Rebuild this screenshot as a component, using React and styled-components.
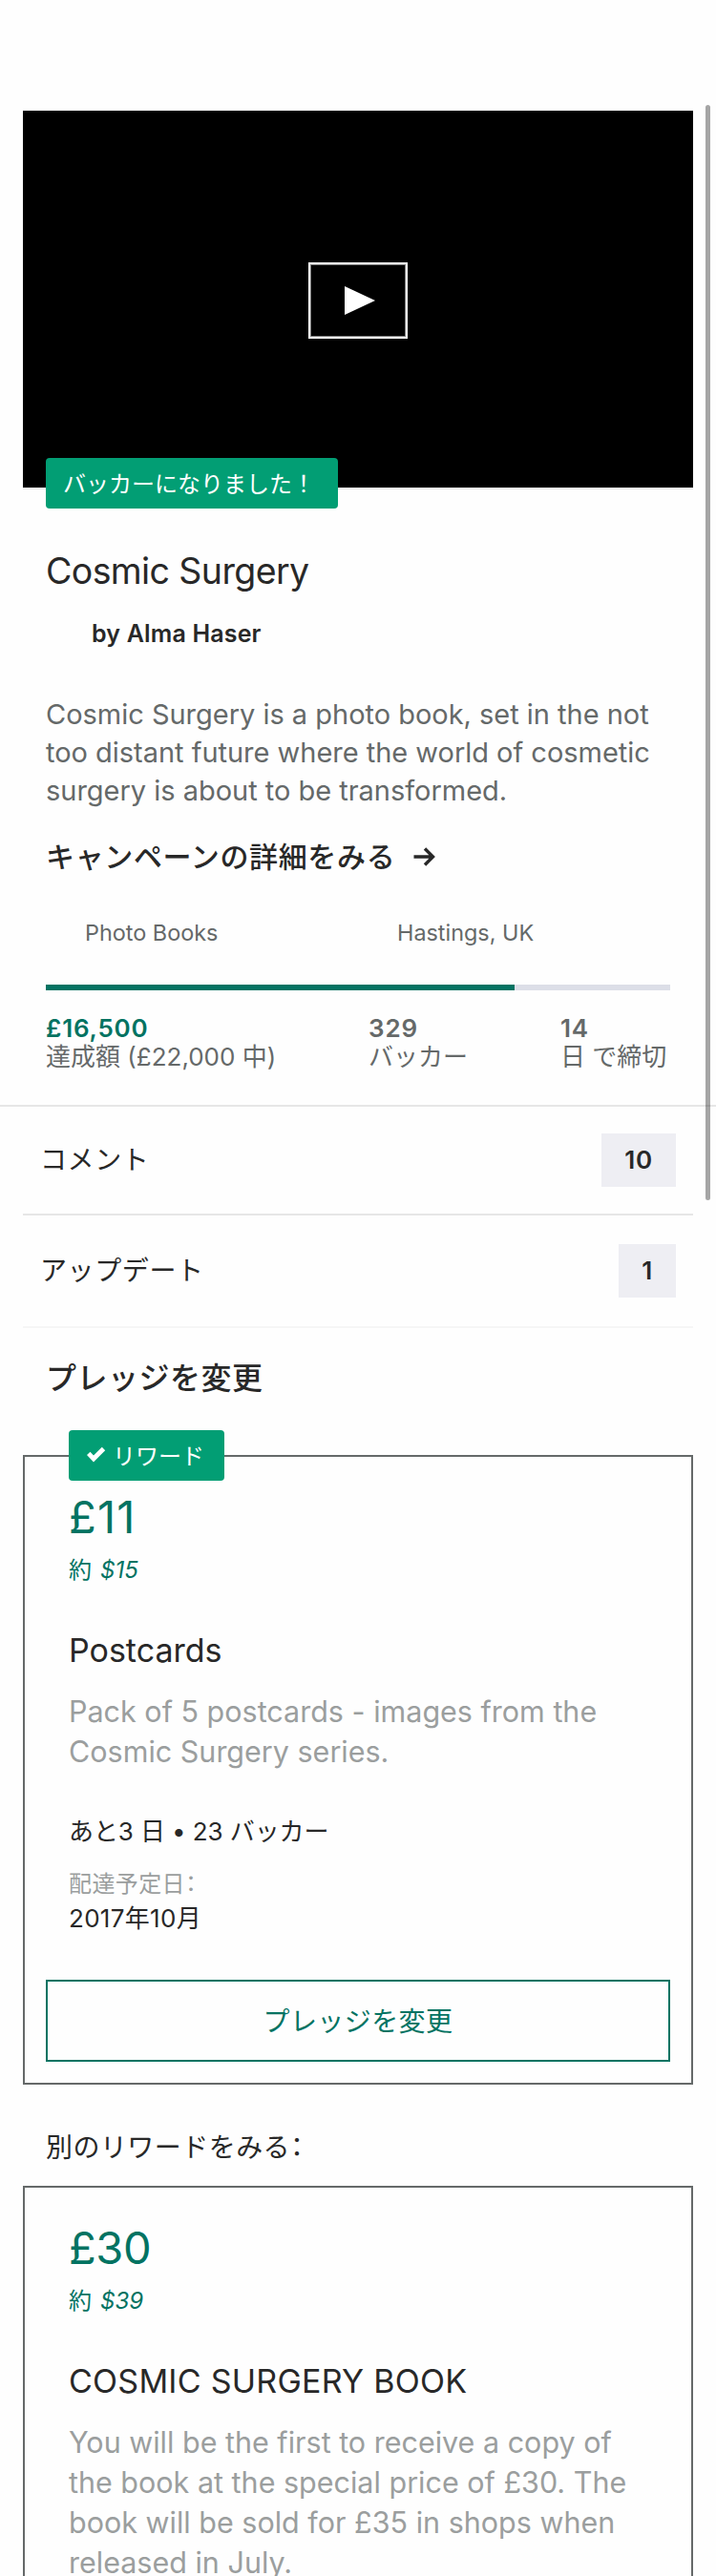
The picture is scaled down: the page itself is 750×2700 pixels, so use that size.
import React from 'react';
import styled, { createGlobalStyle, ThemeProvider } from 'styled-components';

const theme = {
  ink: '#282828',
  body: '#656969',
  muted: '#9b9e9e',
  green: '#037362',
  chip: '#029e74',
  line: '#e6e6e6',
  pale: '#eeeef3',
};

const GlobalStyle = createGlobalStyle`
  *, *::before, *::after { box-sizing: border-box; }
  body {
    margin: 0;
    background: #fefefe;
    font-family: Inter, "Noto Sans CJK JP", sans-serif;
  }
  h1, h2, h3, p { margin: 0; font-weight: 400; }
`;

const Screen = styled.main`
  position: relative;
  width: 750px;
  height: 2700px;
  overflow: hidden;
  padding-top: 116px;
  color: ${(p) => p.theme.ink};
  white-space: nowrap;
`;

const ScrollThumb = styled.div`
  position: absolute;
  top: 110px;
  right: 6px;
  width: 5px;
  height: 1148px;
  border-radius: 3px;
  background: rgba(0, 0, 0, 0.35);
`;

const Video = styled.section`
  position: relative;
  display: flex;
  align-items: center;
  justify-content: center;
  height: 397px;
  margin: 0 24px;
  background: #000;
  border-bottom: 2px solid ${(p) => p.theme.line};
`;

const PlayButton = styled.button`
  display: flex;
  align-items: center;
  justify-content: center;
  width: 104px;
  height: 80px;
  margin: 3px 0 0;
  padding: 0 0 0 4px;
  border: 2px solid #fff;
  outline: 1px solid rgba(255, 255, 255, 0.5);
  outline-offset: -3px;
  background: none;
`;

const Chip = styled.div`
  position: absolute;
  top: ${(p) => p.$top}px;
  left: ${(p) => p.$left}px;
  display: flex;
  align-items: center;
  gap: 7px;
  height: 53px;
  padding: 0 ${(p) => p.$padRight}px 2px 18px;
  border-radius: 4px;
  background: ${(p) => p.theme.chip};
  color: #fff;
  font-size: 24px;
`;

const Summary = styled.section`
  padding: 62px 48px 35px;
`;

const Title = styled.h1`
  font-size: 37.5px;
  line-height: 48px;
  letter-spacing: -0.6px;
`;

const Creator = styled.p`
  margin-top: 25px;
  padding-left: 48px;
  font-size: 25px;
  font-weight: 600;
  line-height: 32px;
  letter-spacing: 0.17px;
`;

const Blurb = styled.p`
  margin-top: 49px;
  color: ${(p) => p.theme.body};
  font-size: 29px;
  line-height: 40px;
  letter-spacing: -0.02px;
`;

const CampaignLink = styled.a`
  display: flex;
  align-items: center;
  gap: 19px;
  margin-top: 29px;
  font-size: 30px;
  font-weight: 500;
  line-height: 40px;
  letter-spacing: 0.65px;
`;

const Categories = styled.div`
  display: grid;
  grid-template-columns: 1fr 1fr;
  margin-top: 45px;
  color: ${(p) => p.theme.body};
  font-size: 23.4px;
  line-height: 30px;
`;

const Category = styled.span`
  padding-left: 41px;
`;

const Track = styled.div`
  height: 6px;
  margin: 39px 0 25px;
  background: #dcdee7;
`;

const Fill = styled.div`
  width: 75%;
  height: 100%;
  background: ${(p) => p.theme.green};
`;

const Stats = styled.div`
  display: flex;
  justify-content: space-between;
  color: ${(p) => p.theme.body};
  font-size: 26px;
  line-height: 30px;
`;

const Stat = styled.div`
  min-width: ${(p) => p.$min || 0}px;
`;

const StatValue = styled.div`
  color: ${(p) => (p.$accent ? p.theme.green : 'inherit')};
  font-weight: 600;
  letter-spacing: 0.8px;
`;

const Row = styled.div`
  display: flex;
  align-items: center;
  justify-content: space-between;
  height: ${(p) => p.$height}px;
  margin: 0 24px;
  padding: 0 18px;
  border-bottom: 2px solid ${(p) => p.$rule};
  font-size: 28px;
  line-height: 40px;
  letter-spacing: 0.6px;
`;

const Rule = styled.div`
  height: 2px;
  background: ${(p) => p.theme.line};
`;

const Count = styled.span`
  padding: 0 24px;
  background: ${(p) => p.theme.pale};
  font-size: 26px;
  font-weight: 600;
  line-height: 56px;
  letter-spacing: 0.8px;
`;

const SectionTitle = styled.h2`
  margin: 29px 48px 56px;
  font-size: 32px;
  font-weight: 500;
  line-height: 48px;
  letter-spacing: 0.5px;
`;

const SectionNote = styled.p`
  margin: 46px 48px 20px;
  font-size: 28px;
  line-height: 40px;
  letter-spacing: 0.45px;
`;

const Card = styled.article`
  position: relative;
  height: ${(p) => p.$height}px;
  margin: 0 24px;
  padding: 35px 22px 0;
  border: 2px solid ${(p) => p.theme.body};
`;

const CardBody = styled.div`
  padding: 0 24px;
`;

const Price = styled.div`
  color: ${(p) => p.theme.green};
  font-size: 47px;
  line-height: 56px;
  letter-spacing: ${(p) => p.$track}px;
`;

const Converted = styled.div`
  display: flex;
  gap: 9px;
  margin-top: 12px;
  color: ${(p) => p.theme.green};
  font-size: 24px;
  line-height: 32px;
`;

const RewardTitle = styled.h3`
  margin-top: 46px;
  font-size: 34px;
  line-height: 44px;
  letter-spacing: ${(p) => p.$track || 0}px;
`;

const RewardText = styled.p`
  margin-top: 21px;
  color: ${(p) => p.theme.muted};
  font-size: 30.5px;
  line-height: 42px;
`;

const Meta = styled.p`
  margin-top: ${(p) => p.$gap || 0}px;
  color: ${(p) => (p.$muted ? p.theme.muted : p.theme.ink)};
  font-size: ${(p) => (p.$muted ? 24 : 26)}px;
  line-height: 36px;
  letter-spacing: ${(p) => p.$track}px;
`;

const Colon = styled.span`
  font-feature-settings: "halt";
`;

const PledgeButton = styled.button`
  display: block;
  width: 100%;
  height: 86px;
  margin-top: 46px;
  padding: 0 0 2px;
  border: 2px solid ${(p) => p.theme.green};
  background: none;
  color: ${(p) => p.theme.green};
  font: inherit;
  font-size: 28px;
  letter-spacing: 0.42px;
`;

const Lines = ({ of }) => of.map((line) => <div key={line}>{line}</div>);

const PlayIcon = () => (
  <svg width="32" height="30" viewBox="0 0 32 30">
    <path d="M0 0L32 15L0 30Z" fill="#fff" />
  </svg>
);

const ArrowIcon = () => (
  <svg width="24" height="22" viewBox="0 0 24 22" fill="none" stroke="#282828" strokeWidth="3.4">
    <path d="M0.5 11H21M12 2.5L20.5 11L12 19.5" />
  </svg>
);

const CheckIcon = () => (
  <svg width="21" height="18" viewBox="0 0 21 18">
    <path d="M1 9L4.5 5.8L8 9.4L16.8 0.8L20.2 4.2L8 16.4Z" fill="#fff" />
  </svg>
);

export default function App() {
  return (
    <ThemeProvider theme={theme}>
      <GlobalStyle />
      <Screen>
        <Video>
          <PlayButton aria-label="Play">
            <PlayIcon />
          </PlayButton>
          <Chip $top={364} $left={24} $padRight={24}>バッカーになりました！</Chip>
        </Video>

        <Summary>
          <Title>Cosmic Surgery</Title>
          <Creator>by Alma Haser</Creator>
          <Blurb as="div">
            <Lines
              of={[
                'Cosmic Surgery is a photo book, set in the not',
                'too distant future where the world of cosmetic',
                'surgery is about to be transformed.',
              ]}
            />
          </Blurb>
          <CampaignLink>
            キャンペーンの詳細をみる
            <ArrowIcon />
          </CampaignLink>
          <Categories>
            <Category>Photo Books</Category>
            <Category>Hastings, UK</Category>
          </Categories>
          <Track>
            <Fill />
          </Track>
          <Stats>
            <Stat>
              <StatValue $accent>£16,500</StatValue>
              <div>達成額 (£22,000 中)</div>
            </Stat>
            <Stat>
              <StatValue>329</StatValue>
              <div>バッカー</div>
            </Stat>
            <Stat $min={115}>
              <StatValue>14</StatValue>
              <div>日 で締切</div>
            </Stat>
          </Stats>
        </Summary>

        <Rule />
        <Row $height={114} $rule={theme.line}>
          コメント
          <Count>10</Count>
        </Row>
        <Row $height={118} $rule="#f6f6f6">
          アップデート
          <Count>1</Count>
        </Row>

        <SectionTitle>プレッジを変更</SectionTitle>
        <Card $height={660}>
          <Chip $top={-28} $left={46} $padRight={21}>
            <CheckIcon />
            リワード
          </Chip>
          <CardBody>
            <Price $track={1.2}>£11</Price>
            <Converted>
              約 <em>$15</em>
            </Converted>
            <RewardTitle>Postcards</RewardTitle>
            <RewardText as="div">
              <Lines of={['Pack of 5 postcards - images from the', 'Cosmic Surgery series.']} />
            </RewardText>
            <Meta $gap={45} $track={-0.1}>あと3 日 • 23 バッカー</Meta>
            <Meta $gap={19} $muted $track={0.4}>
              配達予定日<Colon>：</Colon>
            </Meta>
            <Meta $track={0.3}>2017年10月</Meta>
          </CardBody>
          <PledgeButton>プレッジを変更</PledgeButton>
        </Card>

        <SectionNote>
          別のリワードをみる<Colon>：</Colon>
        </SectionNote>
        <Card $height={700}>
          <CardBody>
            <Price $track={-0.4}>£30</Price>
            <Converted>
              約 <em>$39</em>
            </Converted>
            <RewardTitle $track={0.25}>COSMIC SURGERY BOOK</RewardTitle>
            <RewardText as="div">
              <Lines
                of={[
                  'You will be the first to receive a copy of',
                  'the book at the special price of £30. The',
                  'book will be sold for £35 in shops when',
                  'released in July.',
                ]}
              />
            </RewardText>
          </CardBody>
        </Card>
        <ScrollThumb />
      </Screen>
    </ThemeProvider>
  );
}
